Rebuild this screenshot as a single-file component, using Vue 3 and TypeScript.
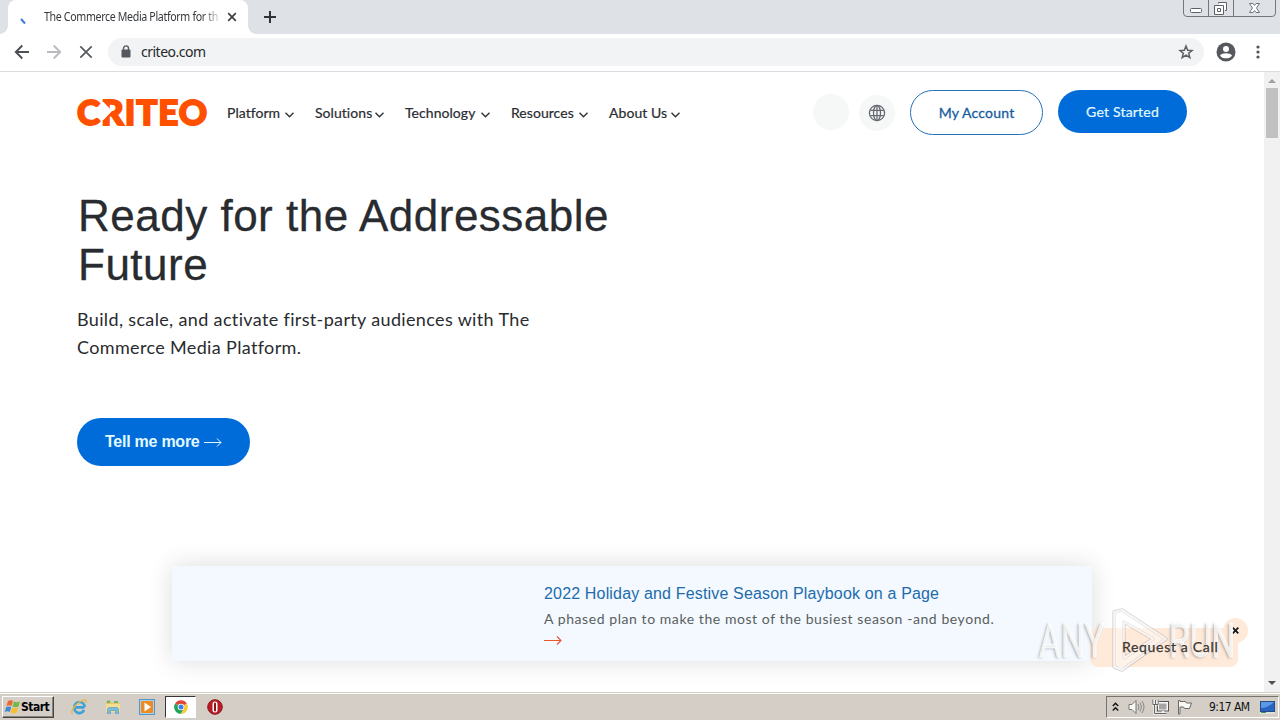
<script setup lang="ts">
interface NavItem {
  label: string
  key: string
}

const navItems: NavItem[] = [
  { label: 'Platform', key: 'platform' },
  { label: 'Solutions', key: 'solutions' },
  { label: 'Technology', key: 'technology' },
  { label: 'Resources', key: 'resources' },
  { label: 'About Us', key: 'about' },
]
</script>

<template>
  <div class="desktop">
    <div class="tabstrip">
      <div class="tab">
        <svg class="spinner" width="16" height="16" viewBox="0 0 16 16"><path d="M5 7L9 11.500" fill="none" stroke="#3f78dc" stroke-width="2" /></svg>
        <div class="tab-title"><span>The Commerce Media Platform for th</span></div>
        <svg class="tab-close" width="10" height="10" viewBox="0 0 10 10"><path d="M1.2 1.2L8.8 8.8M8.8 1.2L1.2 8.8" stroke="#3c4043" stroke-width="1.7" /></svg>
      </div>
      <svg class="new-tab" width="14" height="14" viewBox="0 0 14 14"><path d="M7 1V13M1 7H13" stroke="#30343a" stroke-width="2" /></svg>
      <svg class="window-controls" width="94" height="18" viewBox="0 0 94 18" fill="none" stroke="#74777e">
        <path d="M.5 0V13Q.5 16.5 4 16.5H89Q92.500 16.500 92.500 13V0M25.500 0V16.500M50.500 0V16.500" />
        <rect x="7.500" y="8.500" width="11" height="4" rx="1" fill="#fff" stroke="#5e6268" />
        <path d="M35.500 3.500V2.500H43.500V10.500H42M31.500 5.500H40.500V14.500H31.500ZM34.500 8.500H37.500V11.500H34.500Z" fill="#fff" stroke="#5e6268" />
        <path d="M66.500 3.500H70L71.500 5.500L73 3.500H76.500L73.500 8L76.500 12.500H73L71.500 10.500L70 12.500H66.500L69.500 8Z" fill="#fff" stroke="#72757b" />
      </svg>
    </div>

    <div class="toolbar">
      <svg class="tool-icon" width="16" height="16" viewBox="0 0 16 16"><path d="M15 8H2M8.300 1.500L1.800 8L8.300 14.500" fill="none" stroke="#4c4f53" stroke-width="1.900" /></svg>
      <svg class="tool-icon" width="16" height="16" viewBox="0 0 16 16"><path d="M1 8H14M7.700 1.500L14.200 8L7.700 14.500" fill="none" stroke="#b9bbbe" stroke-width="1.900" /></svg>
      <svg class="tool-icon" width="16" height="16" viewBox="0 0 16 16"><path d="M2.300 2.300L13.700 13.700M13.700 2.300L2.300 13.700" stroke="#55585c" stroke-width="1.700" /></svg>
      <div class="omnibox">
        <svg class="lock" width="10" height="13" viewBox="0 0 10 13"><rect x=".5" y="4.500" width="9" height="8" rx="1" fill="#55595e" /><path d="M2.500 5V3.400A2.500 2.500 0 0 1 7.500 3.400V5" fill="none" stroke="#55595e" stroke-width="1.400" /></svg>
        <span class="url">criteo.com</span>
        <svg class="star" width="16" height="16" viewBox="0 0 16 16"><path d="M8 2L9.700 6.200L14 6.500L10.700 9.300L11.800 13.600L8 11.200L4.200 13.600L5.300 9.300L2 6.500L6.300 6.200Z" fill="none" stroke="#5c6065" stroke-width="1.500" /></svg>
      </div>
      <svg class="profile" width="20" height="20" viewBox="0 0 20 20"><circle cx="10" cy="10" r="9.500" fill="#55585d" /><circle cx="10" cy="7" r="3" fill="#fff" /><path d="M4 13.500C6 10.600 14 10.600 16 13.500C14 17.300 6 17.300 4 13.500" fill="#fff" /></svg>
      <svg class="menu" width="4" height="16" viewBox="0 0 4 16" fill="#505358"><circle cx="2" cy="3" r="1.600" /><circle cx="2" cy="8" r="1.600" /><circle cx="2" cy="13" r="1.600" /></svg>
    </div>

    <div class="viewport">
      <main class="page">
        <header class="site-header">
          <div class="logo">
            <span>CRITEO</span>
            <svg class="notch" width="12" height="18" viewBox="0 0 12 18"><path d="M0 0H1.500L10 9L1.500 18H0Z" fill="#fff" /></svg>
          </div>
          <nav class="nav">
            <span v-for="item in navItems" :key="item.key" class="nav-item" :class="item.key">
              <span class="nav-label">{{ item.label }}</span>
              <svg width="9" height="6" viewBox="0 0 9 6"><path d="M.5 .8L4.500 4.800L8.500 .8" fill="none" stroke="#303236" stroke-width="1.400" /></svg>
            </span>
          </nav>
          <div class="round blank"></div>
          <div class="round">
            <svg width="18" height="18" viewBox="0 0 18 18" fill="none" stroke="#666a70" stroke-width="1.300"><circle cx="9" cy="9" r="7.600" /><ellipse cx="9" cy="9" rx="3.500" ry="7.600" /><path d="M9 1.400V16.600M2.400 6.300H15.600M2.400 11.700H15.600" /></svg>
          </div>
          <div class="account"><span>My Account</span></div>
          <div class="started"><span>Get Started</span></div>
        </header>

        <section class="hero">
          <h1>Ready for the Addressable<br />Future</h1>
          <p>Build, scale, and activate first-party audiences with The<br />Commerce Media Platform.</p>
          <div class="more">
            <span>Tell me more</span>
            <svg width="18" height="9" viewBox="0 0 18 9"><path d="M0 4.500H17M13 .5L17 4.500L13 8.500" fill="none" stroke="#e2f4ff" /></svg>
          </div>
        </section>

        <section class="promo">
          <div class="promo-title">2022 Holiday and Festive Season Playbook on a Page</div>
          <div class="promo-text">A phased plan to make the most of the busiest season -and beyond.</div>
          <svg width="18" height="9" viewBox="0 0 18 9"><path d="M0 4.500H17M13 .5L17 4.500L13 8.500" fill="none" stroke="#e8562a" stroke-width="1.100" /></svg>
        </section>
      </main>

      <div class="scrollbar">
        <svg width="16" height="16" viewBox="0 0 16 16"><path d="M4 11L8 7L12 11Z" fill="#a0a0a0" /></svg>
        <div class="thumb"></div>
        <svg class="down" width="16" height="16" viewBox="0 0 16 16"><path d="M4 5L8 9L12 5Z" fill="#505050" /></svg>
      </div>

      <div class="call"></div>
      <div class="call-close">
        <svg width="7" height="7" viewBox="0 0 7 7"><path d="M.7 .7L6.300 6.300M6.300 .7L.7 6.300" stroke="#17191b" stroke-width="1.800" /></svg>
      </div>
      <div class="watermark">
        <span class="wm-any">ANY</span>
        <svg width="64" height="66" viewBox="0 0 64 66" fill="none" stroke-linejoin="round">
          <path d="M9 4L17 2L61 31L17 62L9 59ZM19 14V50L48 31Z" stroke="#a8a19d" stroke-opacity=".4" stroke-width="3.500" />
          <path d="M9 4L17 2L61 31L17 62L9 59ZM19 14V50L48 31Z" fill="#fff" fill-rule="evenodd" fill-opacity=".4" stroke="#fff" stroke-opacity=".8" stroke-width="1.500" />
        </svg>
        <span class="wm-run">RUN</span>
      </div>
      <span class="call-label">Request a Call</span>
    </div>

    <div class="taskbar">
      <div class="start">
        <svg width="17" height="16" viewBox="0 0 17 16">
          <path d="M4 2Q7 .5 9 2L7.500 7Q5 5.700 2.500 7Z" fill="#ed6830" />
          <path d="M10 2.500Q13 4 16 2.300L14.500 7.500Q11.500 9 8.500 7.500Z" fill="#75b843" />
          <path d="M2.200 8Q5 6.800 7.200 8L5.800 13Q3.300 11.700 .7 13Z" fill="#418bd1" />
          <path d="M8.200 8.500Q11.200 10 14.200 8.500L12.700 13.700Q9.700 15.200 6.700 13.500Z" fill="#f6bf2f" />
        </svg>
        <span>Start</span>
      </div>
      <div class="apps">
        <svg width="18" height="18" viewBox="0 0 18 18" fill="none"><path d="M14.500 9.300H5M4.500 9A5 5 0 0 1 14.500 9M4.500 9A5 5 0 0 0 14 12" stroke="#3da1da" stroke-width="2.700" /><path d="M2.800 15.800C-.5 15 4 7.500 9.500 4C14.500 .6 17.500 1.500 15.600 5" stroke="#e8b83e" stroke-width="1.300" /></svg>
        <svg width="18" height="18" viewBox="0 0 18 18"><path d="M2 3.500H7L8 5H15.500V13H2Z" fill="#e6c765" /><path d="M3 2.500H6V5H3ZM10 3H14V5H10Z" fill="#70b969" /><path d="M2 6H16V14H2Z" fill="#f3df92" /><path d="M3.500 15.500V11.500Q3.500 9.500 5.500 9.500H12.500Q14.500 9.500 14.500 11.500V15.500H11.500V12.500H6.500V15.500Z" fill="#79bddc" stroke="#5195bd" stroke-width=".6" /></svg>
        <svg width="18" height="18" viewBox="0 0 18 18"><rect x="1.500" y="1.500" width="15" height="15" fill="#a9d0ee" stroke="#5496c6" /><rect x="3" y="3" width="12" height="12" rx="1" fill="#f08a20" /><path d="M6.500 4.500V13.500L13 9Z" fill="#fff" /></svg>
        <div class="active-app">
          <svg width="14" height="14" viewBox="0 0 14 14"><path d="M7 7L1.100 3.600A6.800 6.800 0 0 1 12.900 3.600Z" fill="#df4536" /><path d="M7 7L1.100 3.600A6.800 6.800 0 0 0 7 13.800L10 8.500Z" fill="#23a35a" /><path d="M7 7L12.900 3.600A6.800 6.800 0 0 1 7 13.800L10 8.500Z" fill="#f9c832" /><circle cx="7" cy="7" r="3.300" fill="#fff" /><circle cx="7" cy="7" r="2.500" fill="#3e7fe3" /></svg>
        </div>
        <svg width="18" height="18" viewBox="0 0 18 18"><circle cx="9" cy="9" r="7.300" fill="#bd1922" stroke="#861d20" /><rect x="6.500" y="3.500" width="5" height="11" rx="2.500" fill="#fff" /><rect x="8" y="4.500" width="2" height="9" rx="1" fill="#8c1119" /></svg>
      </div>
      <div class="tray">
        <svg class="chevrons" width="7" height="10" viewBox="0 0 7 10"><path d="M.8 4L3.500 1.300L6.200 4M.8 8.500L3.500 5.800L6.200 8.500" fill="none" stroke="#111" stroke-width="1.400" /></svg>
        <svg class="speaker" width="17" height="16" viewBox="0 0 17 16"><path d="M1 5.500H4L8 1.500V14.500L4 10.500H1Z" fill="#f8f8f5" stroke="#777" /><path d="M10 5Q12 8 10 11M12 3.500Q15 8 12 12.500M14 2Q18 8 14 14" fill="none" stroke="#888" /></svg>
        <svg class="network" width="17" height="16" viewBox="0 0 17 16"><rect x="6" y="3.500" width="9.500" height="8" fill="#a5a5a5" stroke="#f8f8f8" stroke-width="2" /><rect x="5.500" y="2.500" width="11" height="9.500" fill="none" stroke="#555" /><path d="M1 .5V5.500H6V.5M3.500 1V5M2.500 6V14.500H14.500M11 12V14" fill="none" stroke="#f8f8f8" stroke-width="2.200" /><path d="M.8 .5V5.500H6.200V.5M3.500 1V5M2.500 6V14.500H14.500" fill="none" stroke="#555" stroke-width=".9" /></svg>
        <svg class="flag" width="17" height="16" viewBox="0 0 17 16"><path d="M2.500 15V1.500H4V2.500H9.500L10.500 4H15.500L13.500 9.500H8.500L7.500 8H4V15Z" fill="#f8f8f5" stroke="#696967" /></svg>
        <span class="clock">9:17 AM</span>
        <svg class="desk" width="15" height="13" viewBox="0 0 15 13"><rect x=".5" y=".5" width="14" height="10" fill="#2865c3" stroke="#284b83" /><path d="M1 7Q8 7 14 1V1H1Z" fill="#5b98e6" /><path d="M0 12H15" stroke="#e8f0f7" /><path d="M1 11.500H6" stroke="#3f934a" /></svg>
      </div>
    </div>
  </div>
</template>

<style>
body {
  margin: 0;
  overflow: hidden;
}
</style>

<style scoped>
* { box-sizing: border-box; }
svg { display: block; flex: none; }
.desktop {
  width: 1280px;
  height: 720px;
  display: flex;
  flex-direction: column;
  background: #fff;
  font-family: Lato, "Liberation Sans", sans-serif;
  white-space: nowrap;
  overflow: hidden;
}
.tabstrip {
  height: 34px;
  flex: none;
  display: flex;
  align-items: flex-start;
  background: #dee1e6;
}
.tab {
  position: relative;
  width: 240px;
  height: 34px;
  margin-left: 8px;
  padding: 0 11px 0 8px;
  display: flex;
  align-items: center;
  background: #fff;
  border-radius: 8px 8px 0 0;
}
.tab::before, .tab::after {
  content: "";
  position: absolute;
  bottom: 0;
  width: 8px;
  height: 8px;
}
.tab::before { left: -8px; background: radial-gradient(circle at 0 0, transparent 7.5px, #fff 8px); }
.tab::after { right: -8px; background: radial-gradient(circle at 100% 0, transparent 7.5px, #fff 8px); }
.spinner { margin-top: 5px; }
.tab-title {
  width: 175px;
  margin-left: 12px;
  font: 12px/16px "Noto Sans", sans-serif;
  letter-spacing: -0.4px;
  color: #35383c;
  -webkit-mask-image: linear-gradient(90deg, #000 158px, transparent 179px);
  mask-image: linear-gradient(90deg, #000 158px, transparent 179px);
}
.tab-title span {
  display: inline-block;
  transform: scaleX(0.887);
  transform-origin: left;
}
.tab-close { margin-left: auto; }
.new-tab { margin: 10px 0 0 15px; }
.window-controls { margin-left: auto; margin-right: 3px; }
.toolbar {
  height: 38px;
  flex: none;
  display: flex;
  align-items: center;
  padding: 0 20px 2px 14px;
  border-bottom: 1px solid #d9dbde;
}
.tool-icon { margin-right: 16px; }
.omnibox {
  width: 1096px;
  height: 28px;
  margin-left: -2px;
  padding: 0 10px 0 13px;
  display: flex;
  align-items: center;
  border-radius: 14px;
  background: #f1f3f4;
}
.url {
  margin-left: 10px;
  font: 14px/18px "Noto Sans", sans-serif;
  letter-spacing: -0.5px;
  color: #27292d;
}
.star { margin-left: auto; }
.profile { margin-left: 12px; }
.menu { margin-left: auto; }
.viewport {
  position: relative;
  height: 620px;
  flex: none;
  display: flex;
}
.page { width: 1264px; overflow: hidden; }
.site-header {
  height: 82px;
  display: flex;
  align-items: flex-start;
  padding: 18px 77px 0 76px;
}
.logo {
  position: relative;
  width: 151px;
  padding-left: 1px;
  margin-top: 3px;
  font: 900 35px/36px Lato, sans-serif;
  letter-spacing: 0.95px;
  color: #ff5000;
  -webkit-text-stroke: 1.8px #ff5000;
}
.notch {
  position: absolute;
  left: 26px;
  top: 9px;
}
.nav {
  width: 586px;
  display: flex;
  margin-top: 14px;
}
.nav-item {
  display: flex;
  align-items: center;
  font: 400 14px/18px Lato, sans-serif;
  -webkit-text-stroke: 0.2px #292c30;
  color: #292c30;
}
.nav-item svg { margin: 3px 0 0 auto; }
.platform { width: 67px; margin-right: 21px; }
.solutions { width: 69px; margin-right: 21px; }
.technology { width: 85px; margin-right: 21px; }
.resources { width: 77px; margin-right: 21px; }
.about { width: 71px; }
.nav-label { letter-spacing: 0.05px; }
.round {
  width: 36px;
  height: 36px;
  margin: 5px 15px 0 0;
  display: grid;
  place-items: center;
  border-radius: 50%;
  background: #f6f8f8;
}
.round.blank { margin: 4px 10px 0 0; }
.account, .started {
  display: grid;
  place-items: center;
  font: 400 14px/18px Lato, sans-serif;
  letter-spacing: 0.2px;
  border-radius: 24px;
}
.account {
  width: 133px;
  height: 45px;
  border: 1px solid #2671bd;
  color: #145c9d;
  -webkit-text-stroke: 0.3px #145c9d;
}
.started {
  width: 129px;
  height: 43px;
  margin-left: 15px;
  background: #006cda;
  color: #e2faff;
  -webkit-text-stroke: 0.2px #e2faff;
}
.hero {
  height: 412px;
  padding: 37px 0 0 77px;
}
h1 {
  margin: 0 0 0 1px;
  font: 400 44px/49px "Liberation Sans", Arial, sans-serif;
  letter-spacing: 0.5px;
  color: #282b2f;
  -webkit-text-stroke: 0.3px #282b2f;
}
.hero p {
  margin: 16px 0 0;
  font: 400 18px/28px Lato, sans-serif;
  letter-spacing: 0.35px;
  color: #292b2e;
}
.more {
  width: 173px;
  height: 48px;
  margin-top: 57px;
  padding-left: 28px;
  display: flex;
  align-items: center;
  border-radius: 24px;
  background: #006cda;
  color: #e2faff;
  font: 700 16px/20px "Liberation Sans", Arial, sans-serif;
  letter-spacing: -0.25px;
}
.more svg { margin: 1px 0 0 4px; }
.promo {
  width: 920px;
  height: 95px;
  margin-left: 172px;
  padding: 17px 0 0 372px;
  background: #f3f9fe;
  box-shadow: 0 0 24px rgba(0, 0, 0, 0.14);
}
.promo-title {
  font: 400 16px/22px "Liberation Sans", Arial, sans-serif;
  letter-spacing: 0.165px;
  color: #216bad;
}
.promo-text {
  margin: 4px 0 7px;
  font: 400 14px/20px Lato, sans-serif;
  letter-spacing: 0.57px;
  color: #5a5e61;
}
.scrollbar {
  width: 16px;
  display: flex;
  flex-direction: column;
  align-items: center;
  background: #f1f1f1;
}
.thumb { width: 12px; height: 50px; background: #c1c1c1; }
.down { margin-top: auto; }
.call {
  position: absolute;
  left: 1090px;
  top: 556px;
  width: 148px;
  height: 39px;
  border-radius: 8px;
  background: #ffe9d9;
}
.call-label {
  position: absolute;
  left: 1122px;
  top: 566px;
  font: 400 14px/18px Lato, sans-serif;
  letter-spacing: 0.68px;
  color: #3b3632;
  -webkit-text-stroke: 0.25px #3b3632;
}
.call-close {
  position: absolute;
  left: 1223px;
  top: 546px;
  width: 25px;
  height: 25px;
  display: grid;
  place-items: center;
  border-radius: 50%;
  background: #ffe9d9;
}
.watermark {
  position: absolute;
  left: 1039px;
  top: 536px;
  width: 200px;
  height: 66px;
  display: flex;
  align-items: center;
  font: 400 48px/60px Roboto, sans-serif;
  color: rgba(255, 255, 255, 0.75);
  -webkit-text-stroke: 0.8px rgba(255, 255, 255, 0.7);
  text-shadow: -2px 1px 3px rgba(90, 90, 90, 0.42);
}
.wm-any, .wm-run { width: 64px; transform: scaleX(0.7); transform-origin: left; }
.watermark svg { margin-left: 2px; }
.taskbar {
  height: 28px;
  flex: none;
  display: flex;
  align-items: flex-start;
  padding: 3px 1px 0 2px;
  border-top: 1px solid #d4d0c8;
  box-shadow: inset 0 1px #fff;
  background: #d4cec7;
}
.start {
  width: 52px;
  height: 22px;
  padding-left: 1px;
  display: flex;
  align-items: center;
  border: 1px solid;
  border-color: #fff #474542 #474542 #fff;
  box-shadow: inset -1px -1px #87837e;
  font: 700 12px/16px "DejaVu Sans Condensed", "DejaVu Sans", sans-serif;
  letter-spacing: -0.5px;
  color: #000;
}
.apps { display: flex; align-items: center; margin-left: 16px; height: 22px; }
.apps > svg + svg { margin-left: 16px; }
.active-app {
  width: 31px;
  height: 22px;
  margin: 0 10px 0 9px;
  display: grid;
  place-items: center;
  border: 1px solid;
  border-color: #393735 #fff #fff #393735;
  background: #fff;
}
.tray {
  width: 173px;
  height: 22px;
  margin-left: auto;
  padding-left: 5px;
  display: flex;
  align-items: center;
  border: 1px solid;
  border-color: #77736e #fff #fff #77736e;
}
.speaker { margin-left: 9px; }
.network { margin-left: 7px; }
.flag { margin-left: 7px; }
.clock {
  width: 44px;
  margin-left: 16px;
  font: 12px/16px "DejaVu Sans Condensed", "Noto Sans", sans-serif;
  letter-spacing: -0.55px;
  color: #111;
}
.desk { margin-left: 7px; }
</style>
